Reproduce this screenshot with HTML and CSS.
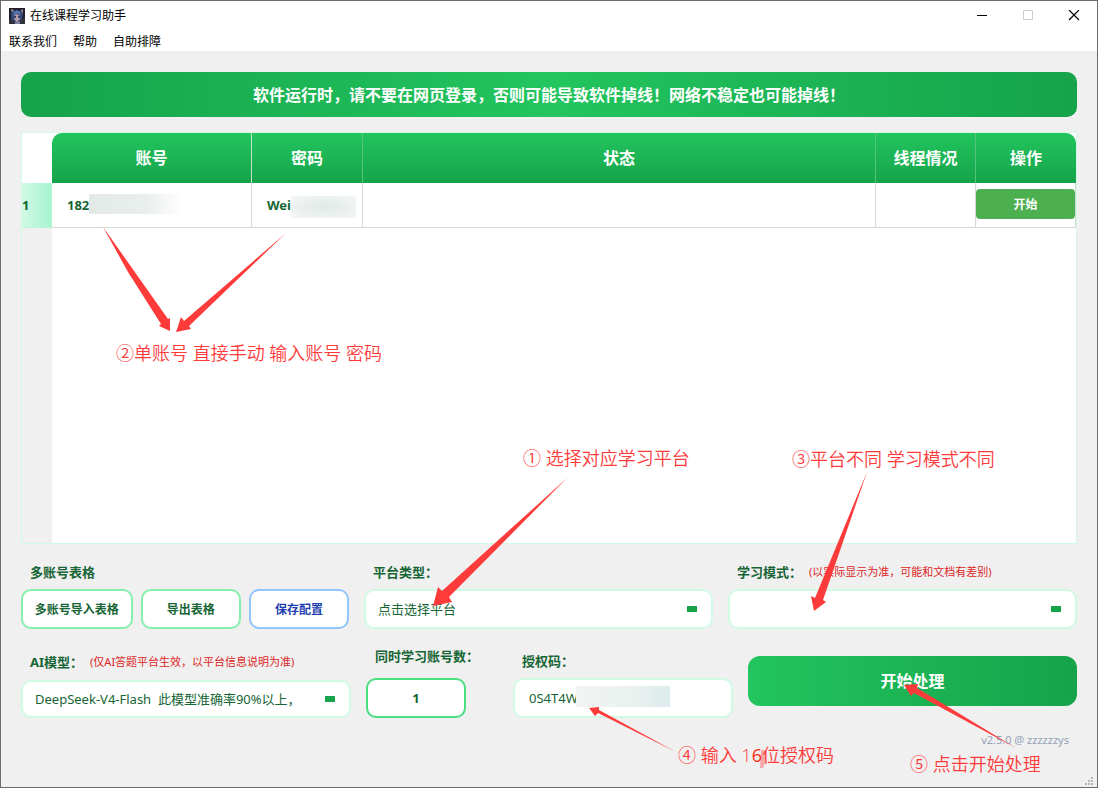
FILE: index.html
```html
<!DOCTYPE html>
<html lang="zh-CN">
<head>
<meta charset="utf-8">
<meta name="viewport" content="width=device-width, initial-scale=1">
<title>在线课程学习助手</title>
<link rel="stylesheet" href="styles.css">
</head>
<body>
<div class="window">
  <header class="titlebar">
    <svg class="app-icon" viewBox="0 0 16 16" aria-hidden="true">
      <rect width="16" height="16" fill="#20202c"/>
      <path d="M2 5 3 1l4 2h3l3-2 1 5-1 7-3 3H5l-3-4z" fill="#34446f"/>
      <path d="M5 4 8 2l4 3-1 2-3-2-4 4z" fill="#5875b4"/>
      <path d="m5 8 3-2 3 2v3l-3 3-3-3z" fill="#b99ba8"/>
      <path d="M5 8h2v2H5zM9 8h2v2H9z" fill="#333b74"/>
      <path d="M2 2 3 1l2 2-2 1zM12 3l2-2v4z" fill="#a68d91"/>
      <path d="M0 11 4 13l2 3H0zM12 12l4-3v7h-5z" fill="#313138"/>
      <path d="m6 14 2-1 3 1v2H6z" fill="#8084a0"/>
    </svg>
    <h1 class="app-title">在线课程学习助手</h1>
    <div class="window-controls">
      <button class="window-button" type="button" aria-label="最小化"><svg viewBox="0 0 12 12"><path d="M1 5.500h10" stroke="#000"/></svg></button>
      <button class="window-button" type="button" aria-label="最大化" disabled><svg viewBox="0 0 12 12"><path d="M1.500 .5h9v9h-9z" fill="none" stroke="#ccc"/></svg></button>
      <button class="window-button" type="button" aria-label="关闭"><svg viewBox="0 0 12 12"><path d="m1 0 10 10M11 0 1 10" stroke="#000" stroke-width="1.200"/></svg></button>
    </div>
  </header>
  <nav class="menubar">
    <button type="button">联系我们</button>
    <button type="button">帮助</button>
    <button type="button">自助排障</button>
  </nav>

  <main class="content">
    <p class="banner">软件运行时，请不要在网页登录，否则可能导致软件掉线！网络不稳定也可能掉线！</p>

    <div class="table-panel">
      <table class="accounts">
        <colgroup>
          <col class="col-index"><col class="col-account"><col class="col-password"><col class="col-status"><col class="col-thread"><col class="col-action">
        </colgroup>
        <thead>
          <tr><td class="corner"></td><th scope="col">账号</th><th scope="col">密码</th><th scope="col">状态</th><th scope="col">线程情况</th><th scope="col">操作</th></tr>
        </thead>
        <tbody>
          <tr>
            <th class="row-index" scope="row">1</th>
            <td class="cell-text"><div class="secret">182<span class="mask mask-account"></span></div></td>
            <td class="cell-text"><div class="secret">Wei<span class="mask mask-password"></span></div></td>
            <td></td>
            <td></td>
            <td class="cell-action"><button class="row-start" type="button">开始</button></td>
          </tr>
        </tbody>
      </table>
    </div>

    <section class="options">
      <div class="group">
        <span class="label">多账号表格</span>
        <div class="button-row">
          <button class="outline-button import-button" type="button">多账号导入表格</button>
          <button class="outline-button" type="button">导出表格</button>
          <button class="outline-button save-button" type="button">保存配置</button>
        </div>
      </div>
      <div class="group">
        <label class="label" for="platform">平台类型：</label>
        <select class="field combo" id="platform"><option>点击选择平台</option></select>
      </div>
      <div class="group">
        <div class="label-row"><label class="label" for="mode">学习模式：</label><span class="hint">(以实际显示为准，可能和文档有差别)</span></div>
        <select class="field combo" id="mode"><option></option></select>
      </div>
    </section>

    <section class="run-options">
      <div class="group model-group">
        <div class="label-row"><label class="label" for="model">AI模型：</label><span class="hint">(仅AI答题平台生效，以平台信息说明为准)</span></div>
        <select class="field combo" id="model"><option>DeepSeek-V4-Flash&nbsp; 此模型准确率90%以上，</option></select>
      </div>
      <div class="group count-group">
        <label class="label" for="count">同时学习账号数：</label>
        <input class="field count" id="count" type="text" inputmode="numeric" value="1">
      </div>
      <div class="group">
        <label class="label" for="license">授权码：</label>
        <div class="license-box">
          <input class="field license" id="license" type="text" value="0S4T4W">
          <span class="mask mask-license"></span>
        </div>
      </div>
      <button class="start-button" type="button">开始处理</button>
    </section>

    <footer class="version">v2.5.0 @ zzzzzzys</footer>
  </main>

  <svg class="grip" viewBox="0 0 9 9" aria-hidden="true"><path d="M6 0h2v2H6zM3 3h2v2H3zM6 3h2v2H6zM0 6h2v2H0zM3 6h2v2H3zM6 6h2v2H6z" fill="#b9b4b4"/></svg>

  <div class="annotations">
    <svg class="arrows" width="1096" height="786" viewBox="1 1 1096 786" aria-hidden="true">
      <g fill="#fd3b3b">
        <path d="M103 227 168 319 170 318 170 331 159 326 161 324 128 272z"/>
        <path d="M286 233 189 326 191 329 176 332 181 317 184 321z"/>
        <path d="M567 478 449 597 452 602 433 606 438 587 442 591z"/>
        <path d="M867 472 823 600 826 602 814 611 811 596 815 598z"/>
        <path d="M676 752 598 713 595 716 589 708 599 707 599 710z"/>
        <path d="M1016 748 914 693 911 696 904 685 918 684 917 688z"/>
      </g>
      <path d="M761 750h5v10l-3 8h-3z" fill="#fd3b3b" opacity="0.400"/>
    </svg>
    <p class="note note-platform">① 选择对应学习平台</p>
    <p class="note note-account">②单账号 直接手动 输入账号 密码</p>
    <p class="note note-mode">③平台不同 学习模式不同</p>
    <p class="note note-license">④ 输入 1<span class="six">6</span>位授权码</p>
    <p class="note note-start">⑤ 点击开始处理</p>
  </div>
</div>
</body>
</html>
```

FILE: styles.css
```css
* {
  box-sizing: border-box;
}

body {
  margin: 0;
  font-family: "Noto Sans", "Noto Sans CJK SC", sans-serif;
  font-size: 13px;
  color: #166534;
}

button,
input,
select {
  margin: 0;
  font-family: inherit;
  color: inherit;
}

p,
h1 {
  margin: 0;
}

.window {
  position: relative;
  display: flex;
  flex-direction: column;
  min-height: 100vh;
  overflow: hidden;
  border: 1px solid #6b6b6d;
  background: #f0f0f0;
}

/* Title bar and menu */

.titlebar {
  display: flex;
  align-items: center;
  height: 29px;
  padding-left: 8px;
  background: #fff;
}

.app-icon {
  width: 16px;
  height: 16px;
}

.app-title {
  flex: 1;
  margin-left: 5px;
  font-size: 12px;
  font-weight: 400;
  line-height: 18px;
  color: #000;
}

.window-controls {
  display: flex;
}

.window-button {
  display: flex;
  align-items: center;
  justify-content: center;
  width: 46px;
  height: 29px;
  padding: 0;
  border: 0;
  background: none;
}

.window-button svg {
  width: 12px;
  height: 12px;
}

.menubar {
  display: flex;
  gap: 16px;
  height: 21px;
  padding: 2px 8px 0;
  background: #fff;
}

.menubar button {
  padding: 0;
  border: 0;
  background: none;
  font-size: 12px;
  line-height: 19px;
  color: #000;
}

/* Content */

.content {
  display: flex;
  flex: 1;
  flex-direction: column;
  padding: 21px 20px 37px;
}

.banner {
  padding: 12px 16px 10px;
  border-radius: 10px;
  background: linear-gradient(to right, #16a34a, #22c55e 50%, #16a34a);
  font-size: 16px;
  font-weight: 700;
  line-height: 23px;
  text-align: center;
  color: #fff;
}

.table-panel {
  flex: 1;
  margin-top: 15px;
  border: 1px solid #d1fae5;
  background: linear-gradient(to right, #f0f0f0 30px, #fff 30px);
}

.accounts {
  width: 100%;
  table-layout: fixed;
  border-collapse: separate;
  border-spacing: 0;
}

.col-index { width: 30px; }
.col-account { width: 200px; }
.col-password { width: 111px; }
.col-thread { width: 100px; }
.col-action { width: 100px; }

.accounts thead th {
  height: 50px;
  padding: 0;
  border-right: 1px solid #54c37e;
  background: linear-gradient(#22c55e, #16a34a);
  font-size: 16px;
  line-height: 24px;
  color: #fff;
}

.accounts thead th:nth-child(2) {
  border-right-color: #bfe6cd;
  border-top-left-radius: 10px;
}

.accounts thead th:last-child {
  border-right: 0;
  border-top-right-radius: 10px;
}

.accounts .corner {
  padding: 0;
  border: 0;
  background: #fff;
}

.accounts tbody td {
  height: 45px;
  padding: 0;
  border-right: 1px solid #d3dad6;
  border-bottom: 1px solid #d3dad6;
  background: #fff;
}

.accounts .row-index {
  padding: 0;
  border-right: 1px solid #bbf7d0;
  border-bottom: 1px solid #bbf7d0;
  background: linear-gradient(to right, #d1fae5, #a7f3d0);
  text-align: left;
}

.accounts .cell-text {
  padding-left: 15px;
  font-weight: 700;
}

.secret {
  position: relative;
  line-height: 20px;
}

.mask {
  position: absolute;
}

.mask-account {
  top: -1px;
  left: 22px;
  width: 94px;
  height: 20px;
  background: linear-gradient(to right, #e2eae6, #e9efec 60%, #fff);
}

.mask-password {
  top: 1px;
  left: 24px;
  width: 65px;
  height: 22px;
  background: radial-gradient(#e1e9e6, #f4f7f6);
}

.accounts .cell-action {
  vertical-align: top;
  padding-top: 6px;
}

.row-start {
  display: block;
  width: 100%;
  height: 30px;
  padding: 0;
  border: 0;
  border-radius: 4px;
  background: #4caf50;
  font-size: 12px;
  font-weight: 700;
  color: #fff;
}

/* Form rows */

.options {
  display: grid;
  grid-template-columns: 328fr 349fr 349fr;
  gap: 15px;
  margin-top: 16px;
}

.run-options {
  display: grid;
  grid-template-columns: 330fr 132fr 220fr 329fr;
  gap: 15px;
  align-items: end;
  margin-top: 15px;
}

.group {
  display: flex;
  flex-direction: column;
  gap: 5px;
  min-width: 0;
}

.model-group {
  gap: 6px;
}

.count-group {
  gap: 10px;
}

.label {
  padding-left: 9px;
  font-weight: 700;
  line-height: 24px;
  white-space: nowrap;
}

.label-row {
  display: flex;
  align-items: center;
  gap: 7px;
}

.hint {
  font-size: 11px;
  line-height: 24px;
  white-space: nowrap;
  color: #dc2626;
}

.button-row {
  display: flex;
  gap: 8px;
}

.outline-button {
  flex: 100;
  height: 40px;
  padding: 0;
  border: 2px solid #86efac;
  border-radius: 10px;
  background: #fff;
  font-size: 12px;
  font-weight: 700;
  white-space: nowrap;
}

.import-button {
  flex: 112;
}

.save-button {
  border-color: #93c5fd;
  color: #1e40af;
}

.field {
  width: 100%;
  height: 40px;
  padding: 0 14px;
  border: 2px solid #d1fae5;
  border-radius: 10px;
  background-color: #fff;
  font-size: 13px;
}

.combo {
  appearance: none;
  padding: 0 40px 0 12px;
  background-image: linear-gradient(#16a34a, #16a34a);
  background-position: right 14px center;
  background-repeat: no-repeat;
  background-size: 10px 6px;
}

.model-group .field {
  height: 38px;
}

.count {
  width: 100px;
  border-color: #4ade80;
  font-weight: 700;
  text-align: center;
}

.license-box {
  position: relative;
}

.license-box .field {
  display: block;
}

.mask-license {
  top: 8px;
  left: 63px;
  width: 94px;
  height: 21px;
  background: linear-gradient(to right, #f0f4f2, #eaf1ef 65%, #dcecee);
}

.start-button {
  align-self: center;
  height: 50px;
  padding: 0 0 2px;
  border: 0;
  border-radius: 12px;
  background: linear-gradient(to right, #22c55e, #16a34a);
  font-size: 16px;
  font-weight: 700;
  color: #fff;
}

.version {
  margin-top: 12px;
  padding-right: 8px;
  font-size: 11px;
  line-height: 20px;
  text-align: right;
  color: #94a3b8;
}

.grip {
  position: absolute;
  right: 3px;
  bottom: 1px;
  width: 9px;
  height: 9px;
}

/* Tutorial notes drawn over the window */

.annotations {
  position: absolute;
  inset: 0;
  pointer-events: none;
}

.arrows {
  display: block;
}

.note {
  position: absolute;
  font-family: "Open Sans", "Noto Sans CJK SC", sans-serif;
  font-size: 18px;
  font-weight: 350;
  line-height: 26px;
  white-space: nowrap;
  color: #fd3b3b;
}

.note-platform { left: 522px; top: 444px; }
.note-account { left: 115px; top: 339px; }
.note-mode { left: 791px; top: 445px; }
.note-license { left: 677px; top: 741px; }
.note-start { left: 909px; top: 750px; }

.six {
  font-weight: 500;
  color: #ff2a12;
}
```
